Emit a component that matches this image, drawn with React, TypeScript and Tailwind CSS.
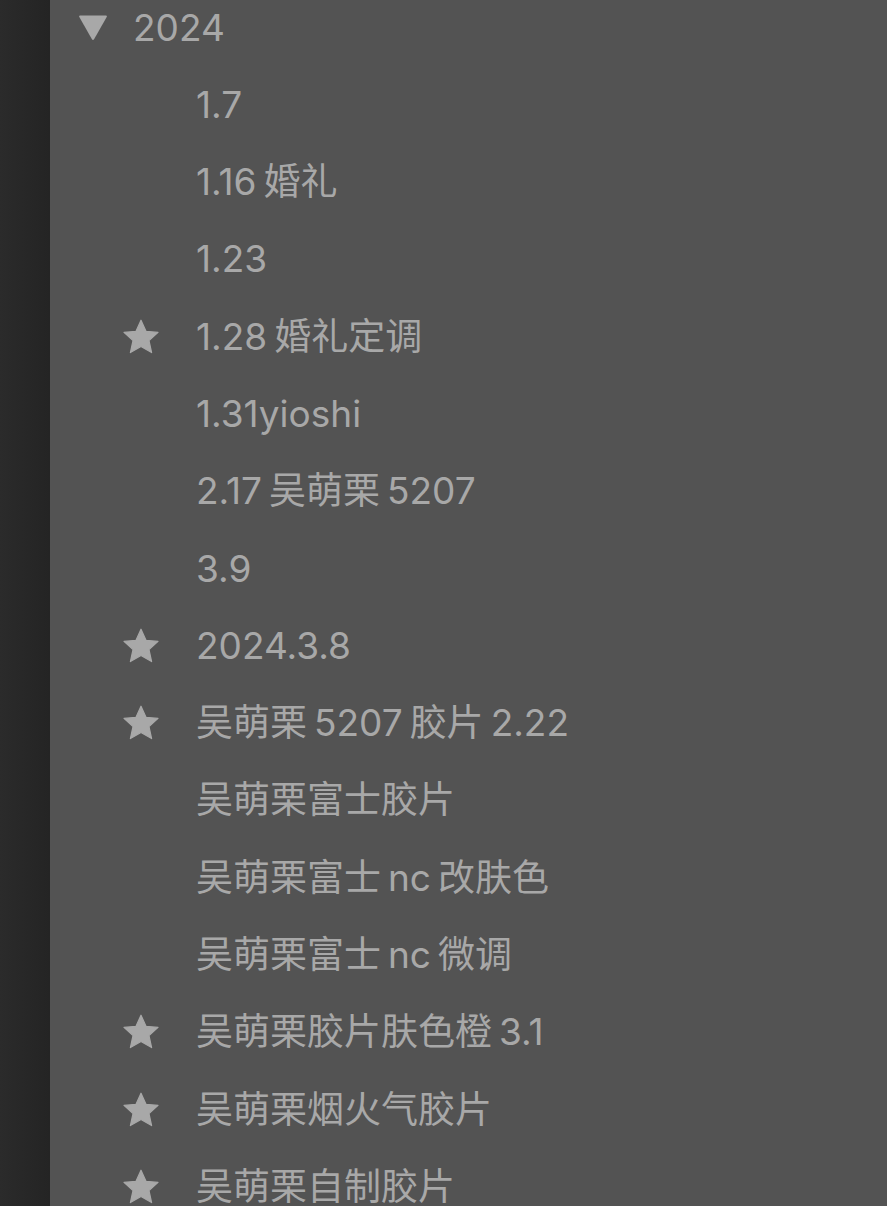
import React from "react";

const items: { label: string; star?: boolean }[] = [
  { label: "1.7" },
  { label: "1.16 婚礼" },
  { label: "1.23" },
  { label: "1.28 婚礼定调", star: true },
  { label: "1.31yioshi" },
  { label: "2.17 吴萌栗 5207" },
  { label: "3.9" },
  { label: "2024.3.8", star: true },
  { label: "吴萌栗 5207 胶片 2.22", star: true },
  { label: "吴萌栗富士胶片" },
  { label: "吴萌栗富士 nc 改肤色" },
  { label: "吴萌栗富士 nc 微调" },
  { label: "吴萌栗胶片肤色橙 3.1", star: true },
  { label: "吴萌栗烟火气胶片", star: true },
  { label: "吴萌栗自制胶片", star: true },
];

function Star() {
  return (
    <svg width="36" height="35" viewBox="0 0 36 35">
      <path
        d="M18 1.2 L23 12.3 L35 13.4 L26 21.6 L28.6 33.6 L18 27.4 L7.4 33.6 L10 21.6 L1 13.4 L13 12.3 Z"
        fill="#a8a8a8"
        stroke="#a8a8a8"
        strokeWidth="1.2"
        strokeLinejoin="round"
      />
    </svg>
  );
}

function Triangle() {
  return (
    <svg width="30" height="28" viewBox="0 0 30 28" fill="#a8a8a8">
      <path d="M2 2.5 L28 2.5 Q29.5 2.5 28.7 4 L16.2 26 Q15 27.8 13.8 26 L1.3 4 Q0.5 2.5 2 2.5 Z" />
    </svg>
  );
}

function Label({ text }: { text: string }) {
  const parts = text.split(" ");
  return (
    <span className="ml-[37px] text-[37px] leading-none whitespace-nowrap">
      {parts.map((p, i) => (
        <React.Fragment key={i}>
          {i > 0 ? <span className="inline-block w-[7px]" /> : null}
          {p}
        </React.Fragment>
      ))}
    </span>
  );
}

export default function App() {
  return (
    <div
      className="flex w-[887px] h-[1206px] overflow-hidden text-[#a8a8a8]"
      style={{ fontFamily: 'Inter, "Noto Sans CJK SC", sans-serif' }}
    >
      <div className="w-[50px] shrink-0 bg-gradient-to-r from-[#2b2b2b] to-[#242424]" />
      <div className="flex-1 bg-[#535353]">
        <div className="-mt-[11.65px] flex flex-col">
          <div className="flex h-[77.3px] items-center pl-[28px]">
            <div className="flex w-[30px] items-center justify-center">
              <Triangle />
            </div>
            <span className="ml-[25px] text-[37px] leading-none">2024</span>
          </div>
          {items.map((it, i) => (
            <div key={i} className="flex h-[77.3px] items-center pl-[73px]">
              <div className="flex w-[36px] items-center justify-center">
                {it.star ? <Star /> : null}
              </div>
              <Label text={it.label} />
            </div>
          ))}
        </div>
      </div>
    </div>
  );
}
